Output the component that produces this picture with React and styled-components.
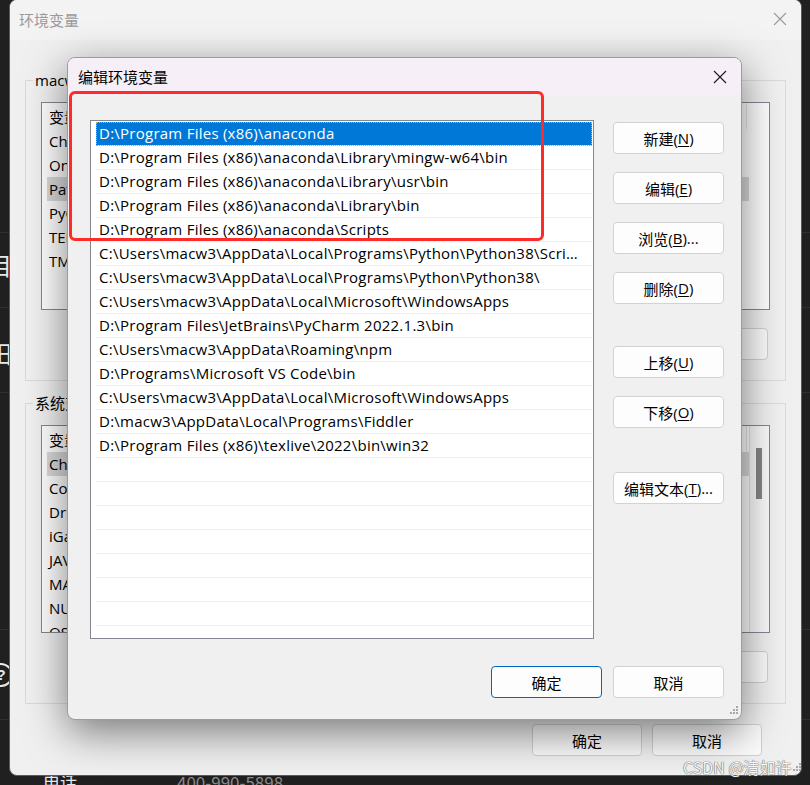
import styled, { createGlobalStyle } from "styled-components";

const paths = [
  "D:\\Program Files (x86)\\anaconda",
  "D:\\Program Files (x86)\\anaconda\\Library\\mingw-w64\\bin",
  "D:\\Program Files (x86)\\anaconda\\Library\\usr\\bin",
  "D:\\Program Files (x86)\\anaconda\\Library\\bin",
  "D:\\Program Files (x86)\\anaconda\\Scripts",
  "C:\\Users\\macw3\\AppData\\Local\\Programs\\Python\\Python38\\Scripts\\",
  "C:\\Users\\macw3\\AppData\\Local\\Programs\\Python\\Python38\\",
  "C:\\Users\\macw3\\AppData\\Local\\Microsoft\\WindowsApps",
  "D:\\Program Files\\JetBrains\\PyCharm 2022.1.3\\bin",
  "C:\\Users\\macw3\\AppData\\Roaming\\npm",
  "D:\\Programs\\Microsoft VS Code\\bin",
  "C:\\Users\\macw3\\AppData\\Local\\Microsoft\\WindowsApps",
  "D:\\macw3\\AppData\\Local\\Programs\\Fiddler",
  "D:\\Program Files (x86)\\texlive\\2022\\bin\\win32",
];

const userVars = ["ChocolateyLastPathUpdate", "OneDrive", "Path", "PyCharm", "TEMP", "TMP"];
const sysVars = [
  "ChocolateyInstall",
  "ComSpec",
  "DriverData",
  "iGameCenter",
  "JAVA_HOME",
  "MAVEN_HOME",
  "NUMBER_OF_PROCESSORS",
  "OS",
];

function CloseIcon({ color }) {
  return (
    <svg width="16" height="16" viewBox="0 0 16 16">
      <path d="M2 2L14 14M14 2L2 14" stroke={color} strokeWidth="1.1" fill="none" />
    </svg>
  );
}

function Grip() {
  return (
    <svg width="12" height="12" viewBox="0 0 12 12">
      {[
        [9, 1],
        [6, 4],
        [9, 4],
        [3, 7],
        [6, 7],
        [9, 7],
      ].map(([x, y]) => (
        <rect key={x + "-" + y} x={x} y={y} width="2" height="2" fill="#a8a8a8" />
      ))}
    </svg>
  );
}

export default function App() {
  return (
    <Desktop>
      <GlobalStyle />
      <BackApp>
        <BackRow $h={233} />
        <BackRow $h={75}>
          <BackGlyph $shift={-12}>目</BackGlyph>
        </BackRow>
        <BackRow $h={85}>
          <BackGlyph $shift={4}>田</BackGlyph>
        </BackRow>
        <BackRow $h={237} />
        <BackRow $h={90}>
          <HelpGlyph>?</HelpGlyph>
        </BackRow>
        <BackBottom>
          <span>电话</span>
          <Phone>400-990-5898</Phone>
        </BackBottom>
      </BackApp>

      <BackWindow>
        <WinTitle>
          <span>环境变量</span>
          <CloseIcon color="#9a9a9a" />
        </WinTitle>
        <WinContent>
          <Group $top={30}>
            <Legend>macw3 的用户变量(U)</Legend>
            <GroupBody>
              <VarList>
                <VarCol>
                  <VarHeader>变量</VarHeader>
                  {userVars.map((v, i) => (
                    <VarRow key={v} $selected={i === 2}>
                      {v}
                    </VarRow>
                  ))}
                </VarCol>
              </VarList>
              <GroupButtons>
                <WinButton>新建(N)...</WinButton>
                <WinButton>编辑(E)...</WinButton>
                <WinButton>删除(D)</WinButton>
              </GroupButtons>
            </GroupBody>
          </Group>
          <Group $top={12}>
            <Legend>系统变量(S)</Legend>
            <GroupBody>
              <VarList>
                <VarCol>
                  <VarHeader>变量</VarHeader>
                  {sysVars.map((v, i) => (
                    <VarRow key={v} $selected={i === 0}>
                      {v}
                    </VarRow>
                  ))}
                </VarCol>
                <ScrollTrack>
                  <ScrollThumb />
                </ScrollTrack>
              </VarList>
              <GroupButtons>
                <WinButton>新建(W)...</WinButton>
                <WinButton>编辑(I)...</WinButton>
                <WinButton>删除(L)</WinButton>
              </GroupButtons>
            </GroupBody>
          </Group>
          <WinFooter>
            <WinButton>确定</WinButton>
            <WinButton>取消</WinButton>
          </WinFooter>
        </WinContent>
      </BackWindow>

      <Dialog>
        <DialogTitle>
          <span>编辑环境变量</span>
          <CloseIcon color="#1a1a1a" />
        </DialogTitle>
        <DialogBody>
          <DialogMain>
            <PathList>
              {Array.from({ length: 22 }, (_, i) => (
                <PathRow key={i} $selected={i === 0}>
                  {paths[i] || ""}
                </PathRow>
              ))}
            </PathList>
            <SideButtons>
              <Button $mt={2}>
                新建(<u>N</u>)
              </Button>
              <Button $mt={18}>
                编辑(<u>E</u>)
              </Button>
              <Button $mt={18}>
                浏览(<u>B</u>)...
              </Button>
              <Button $mt={18}>
                删除(<u>D</u>)
              </Button>
              <Button $mt={42}>
                上移(<u>U</u>)
              </Button>
              <Button $mt={18}>
                下移(<u>O</u>)
              </Button>
              <Button $mt={44}>
                编辑文本(<u>T</u>)...
              </Button>
            </SideButtons>
          </DialogMain>
          <DialogFooter>
            <Button $primary>确定</Button>
            <Button>取消</Button>
          </DialogFooter>
        </DialogBody>
        <DialogGrip>
          <Grip />
        </DialogGrip>
      </Dialog>

      <Highlight />
      <Watermark>CSDN @清如许</Watermark>
      <WinGrip>
        <Grip />
      </WinGrip>
    </Desktop>
  );
}

const GlobalStyle = createGlobalStyle`
  html, body {
    margin: 0;
    padding: 0;
    background: #202020;
    overflow: hidden;
  }
  body {
    font-family: "Open Sans", "Noto Sans CJK SC", sans-serif;
  }
`;

const Desktop = styled.div`
  position: relative;
  width: 810px;
  height: 785px;
  overflow: hidden;
  background: #202020;
`;

const BackApp = styled.div`
  display: flex;
  flex-direction: column;
  width: 100%;
  height: 100%;
`;

const BackRow = styled.div`
  height: ${(p) => p.$h}px;
  flex-shrink: 0;
  border-bottom: 1px solid #2f2f2f;
  box-sizing: border-box;
  display: flex;
  align-items: center;
  color: #e8e8e8;
  font-family: "Noto Sans CJK SC", sans-serif;
`;

const BackGlyph = styled.span`
  font-size: 24px;
  margin-left: -12px;
  margin-top: ${(p) => p.$shift}px;
`;

const HelpGlyph = styled.span`
  width: 20px;
  height: 20px;
  margin-left: -11px;
  border: 2px solid #e8e8e8;
  border-radius: 50%;
  font-size: 15px;
  line-height: 20px;
  text-align: center;
  font-family: "Liberation Sans", sans-serif;
  font-weight: bold;
`;

const BackBottom = styled.div`
  flex: 1;
  display: flex;
  align-items: flex-end;
  padding: 0 0 0 43px;
  font-family: "Noto Sans CJK SC", sans-serif;
  font-size: 17px;
  line-height: 22px;
  color: #e6e6e6;
  margin-bottom: -8px;
`;

const Phone = styled.span`
  margin-left: 100px;
  color: #8a8a8a;
`;

const BackWindow = styled.div`
  position: absolute;
  left: 9px;
  top: -1px;
  width: 793px;
  height: 777px;
  box-sizing: border-box;
  border: 1px solid #5a5a5a;
  border-radius: 8px;
  background: #f0f0f0;
  display: flex;
  flex-direction: column;
  overflow: hidden;
`;

const WinTitle = styled.div`
  height: 38px;
  flex-shrink: 0;
  display: flex;
  align-items: center;
  justify-content: space-between;
  padding: 0 13px 2px 9px;
  font-size: 15px;
  color: #9a9a9a;
  background: #f3f3f3;
`;

const WinContent = styled.div`
  display: flex;
  flex-direction: column;
  padding: 0 15px;
`;

const Group = styled.fieldset`
  margin: ${(p) => p.$top}px 0 0;
  padding: 0;
  border: 1px solid #dadada;
  min-width: 0;
`;

const GroupBody = styled.div`
  padding: 12px 15px 20px;
`;

const Legend = styled.legend`
  margin-left: 7px;
  padding: 0 2px;
  font-size: 15px;
  line-height: 20px;
  color: #000;
`;

const VarList = styled.div`
  height: 208px;
  box-sizing: border-box;
  border: 1px solid #828790;
  background: #fff;
  display: flex;
  overflow: hidden;
`;

const VarCol = styled.div`
  flex: 1;
  display: flex;
  flex-direction: column;
`;

const VarHeader = styled.div`
  height: 26px;
  flex-shrink: 0;
  width: 700px;
  box-sizing: border-box;
  margin-left: 5px;
  padding-left: 2px;
  border-right: 1px solid #e5e5e5;
  display: flex;
  align-items: center;
  font-size: 15px;
  color: #000;
`;

const VarRow = styled.div`
  height: 24px;
  flex-shrink: 0;
  width: 700px;
  margin-left: 5px;
  padding-left: 2px;
  display: flex;
  align-items: center;
  font-size: 15px;
  color: #000;
  background: ${(p) => (p.$selected ? "#d9d9d9" : "transparent")};
`;

const ScrollTrack = styled.div`
  width: 22px;
  flex-shrink: 0;
  box-sizing: border-box;
  border-left: 1px solid #e3e3e3;
  background: #fafafa;
  padding-left: 6px;
`;

const ScrollThumb = styled.div`
  width: 6px;
  height: 51px;
  margin-top: 22px;
  background: #858585;
`;

const GroupButtons = styled.div`
  display: flex;
  justify-content: flex-end;
  gap: 10px;
  margin: 18px 2px 0 0;
`;

const WinButton = styled.div`
  width: 110px;
  height: 32px;
  box-sizing: border-box;
  border: 1px solid #d0d0d0;
  border-radius: 4px;
  background: #fbfbfb;
  display: flex;
  align-items: center;
  justify-content: center;
  font-size: 15px;
  color: #000;
`;

const WinFooter = styled.div`
  display: flex;
  justify-content: flex-end;
  gap: 10px;
  margin: 20px 24px 0 0;
`;

const Dialog = styled.div`
  position: absolute;
  left: 67px;
  top: 57px;
  width: 675px;
  height: 663px;
  box-sizing: border-box;
  border: 1px solid #9c9c9c;
  border-radius: 8px;
  background: #f0f0f0;
  box-shadow: 0 12px 42px rgba(0, 0, 0, 0.5);
  display: flex;
  flex-direction: column;
  overflow: hidden;
`;

const DialogTitle = styled.div`
  height: 37px;
  flex-shrink: 0;
  display: flex;
  align-items: center;
  justify-content: space-between;
  padding: 0 13px 0 10px;
  background: #f7eff7;
  font-size: 15px;
  color: #000;
`;

const DialogBody = styled.div`
  flex: 1;
  display: flex;
  flex-direction: column;
  padding: 25px 17px 0 22px;
`;

const DialogMain = styled.div`
  display: flex;
  gap: 19px;
`;

const PathList = styled.div`
  width: 504px;
  height: 519px;
  box-sizing: border-box;
  border: 1px solid #828790;
  background: #fff;
  padding: 1px 1px 0 5px;
  overflow: hidden;
`;

const PathRow = styled.div`
  height: 24px;
  box-sizing: border-box;
  padding: 0 9px 0 3px;
  border-bottom: 1px solid #f0f0f0;
  font-size: 15px;
  letter-spacing: 0.25px;
  line-height: 23px;
  white-space: nowrap;
  overflow: hidden;
  text-overflow: ellipsis;
  color: ${(p) => (p.$selected ? "#fff" : "#000")};
  background: ${(p) => (p.$selected ? "#0078d7" : "transparent")};
  outline: ${(p) => (p.$selected ? "1px dotted #e8a33c" : "none")};
  outline-offset: -1px;
`;

const SideButtons = styled.div`
  display: flex;
  flex-direction: column;
`;

const Button = styled.div`
  width: 111px;
  height: 32px;
  margin-top: ${(p) => p.$mt || 0}px;
  box-sizing: border-box;
  border: 1px solid ${(p) => (p.$primary ? "#0067c0" : "#d3d3d3")};
  border-radius: 4px;
  background: #fdfdfd;
  display: flex;
  align-items: center;
  justify-content: center;
  font-size: 15px;
  color: #000;

  u {
    text-decoration-thickness: 1px;
    text-underline-offset: 2px;
  }
`;

const DialogFooter = styled.div`
  display: flex;
  justify-content: flex-end;
  gap: 11px;
  margin-top: 27px;
`;

const DialogGrip = styled.div`
  position: absolute;
  right: 2px;
  bottom: 2px;
  line-height: 0;
`;

const Highlight = styled.div`
  position: absolute;
  left: 69px;
  top: 91px;
  width: 475px;
  height: 150px;
  box-sizing: border-box;
  border: 3px solid #ff2a2a;
  border-radius: 6px;
`;

const Watermark = styled.div`
  position: absolute;
  left: 683px;
  top: 756px;
  font-family: "Noto Sans CJK SC", sans-serif;
  font-size: 16px;
  line-height: 22px;
  color: #f6f6f6;
  text-shadow: 0 0 1px #555, 0 0 1px #555;
`;

const WinGrip = styled.div`
  position: absolute;
  left: 790px;
  top: 762px;
  line-height: 0;
`;
